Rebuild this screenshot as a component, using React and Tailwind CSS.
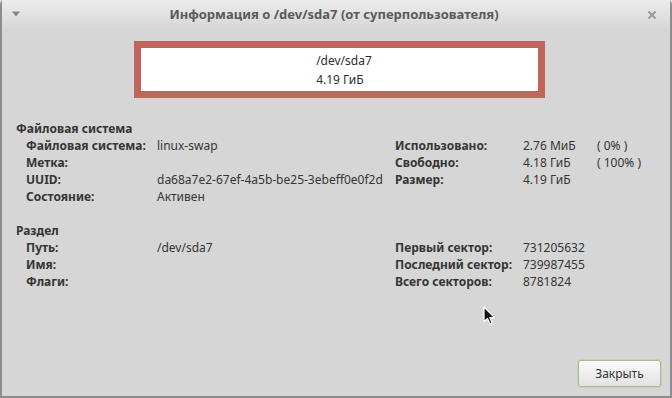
import React from 'react';

const font = { fontFamily: '"Noto Sans", "Open Sans", sans-serif' };

const Row = ({ label, value, rLabel, rValue, rExtra }) => (
  <div className="flex h-[17px] items-center">
    <div className="flex w-[379px] pl-[10px]">
      <span className="w-[131px] shrink-0 font-bold">{label}</span>
      <span className="whitespace-nowrap">{value}</span>
    </div>
    <span className="w-[128px] shrink-0 font-bold whitespace-nowrap">{rLabel}</span>
    <span className="w-[74px] shrink-0 whitespace-nowrap">{rValue}</span>
    <span className="whitespace-nowrap">{rExtra}</span>
  </div>
);

export default function App() {
  return (
    <div style={font} className="relative h-[398px] w-[672px] overflow-hidden bg-[#d6d6d6] text-[12px] text-[#353535]">
      <div className="flex h-full flex-col rounded-t-[5px] border-x-2 border-b-2 border-[#8c8c8c]">
        {/* title bar */}
        <div className="flex h-[30px] shrink-0 items-center bg-gradient-to-b from-[#ececec] to-[#d6d6d6] px-[9px]">
          <svg width="10" height="8" viewBox="0 0 10 8" className="mt-[-2px]">
            <path d="M1 1.5 L9 1.5 L5 6.5 Z" fill="#8a8a8a" />
          </svg>
          <div className="flex-1 text-center text-[13px] font-bold text-[#5a5a5a]">
            Информация о /dev/sda7 (от суперпользователя)
          </div>
          <svg width="10" height="10" viewBox="0 0 10 10" className="mr-[4px]">
            <path d="M1.5 1.5 L8.5 8.5 M8.5 1.5 L1.5 8.5" stroke="#9a9a9a" strokeWidth="2" />
          </svg>
        </div>

        {/* device box */}
        <div className="mt-[11px] flex justify-center pl-[6px]">
          <div className="flex h-[57px] w-[411px] justify-center border-[7px] border-[#c0655b] bg-white">
            <div className="flex flex-col justify-center pl-[10px] leading-[19px] text-[#2e2e2e]">
              <span>/dev/sda7</span>
              <span>4.19 ГиБ</span>
            </div>
          </div>
        </div>

        <div className="mt-[22px] pl-[14px]">
          <div className="flex h-[17px] items-center font-bold">Файловая система</div>
          <Row label="Файловая система:" value="linux-swap" rLabel="Использовано:" rValue="2.76 МиБ" rExtra="( 0% )" />
          <Row label="Метка:" value="" rLabel="Свободно:" rValue="4.18 ГиБ" rExtra="( 100% )" />
          <Row label="UUID:" value="da68a7e2-67ef-4a5b-be25-3ebeff0e0f2d" rLabel="Размер:" rValue="4.19 ГиБ" />
          <Row label="Состояние:" value="Активен" />

          <div className="mt-[17px] flex h-[17px] items-center font-bold">Раздел</div>
          <Row label="Путь:" value="/dev/sda7" rLabel="Первый сектор:" rValue="731205632" />
          <Row label="Имя:" value="" rLabel="Последний сектор:" rValue="739987455" />
          <Row label="Флаги:" value="" rLabel="Всего секторов:" rValue="8781824" />
        </div>

        <div className="mt-auto mb-[9px] flex justify-end pr-[9px]">
          <button className="flex h-[27px] w-[83px] items-center justify-center rounded-[3px] border border-[#a9bb8c] bg-gradient-to-b from-[#fafafa] to-[#e2e2e2] text-[12px] text-[#333] shadow-[0_0_0_1px_#c8d4b4]">
            Закрыть
          </button>
        </div>
      </div>

      {/* mouse pointer */}
      <svg width="13" height="20" viewBox="0 0 13 20" className="absolute left-[483px] top-[306px]">
        <path d="M1 1 L1 15.5 L4.5 12.5 L7 18 L9 17 L6.8 11.6 L11.5 11.6 Z" fill="#111" stroke="#fff" strokeWidth="1.2" strokeLinejoin="round" />
      </svg>
    </div>
  );
}
